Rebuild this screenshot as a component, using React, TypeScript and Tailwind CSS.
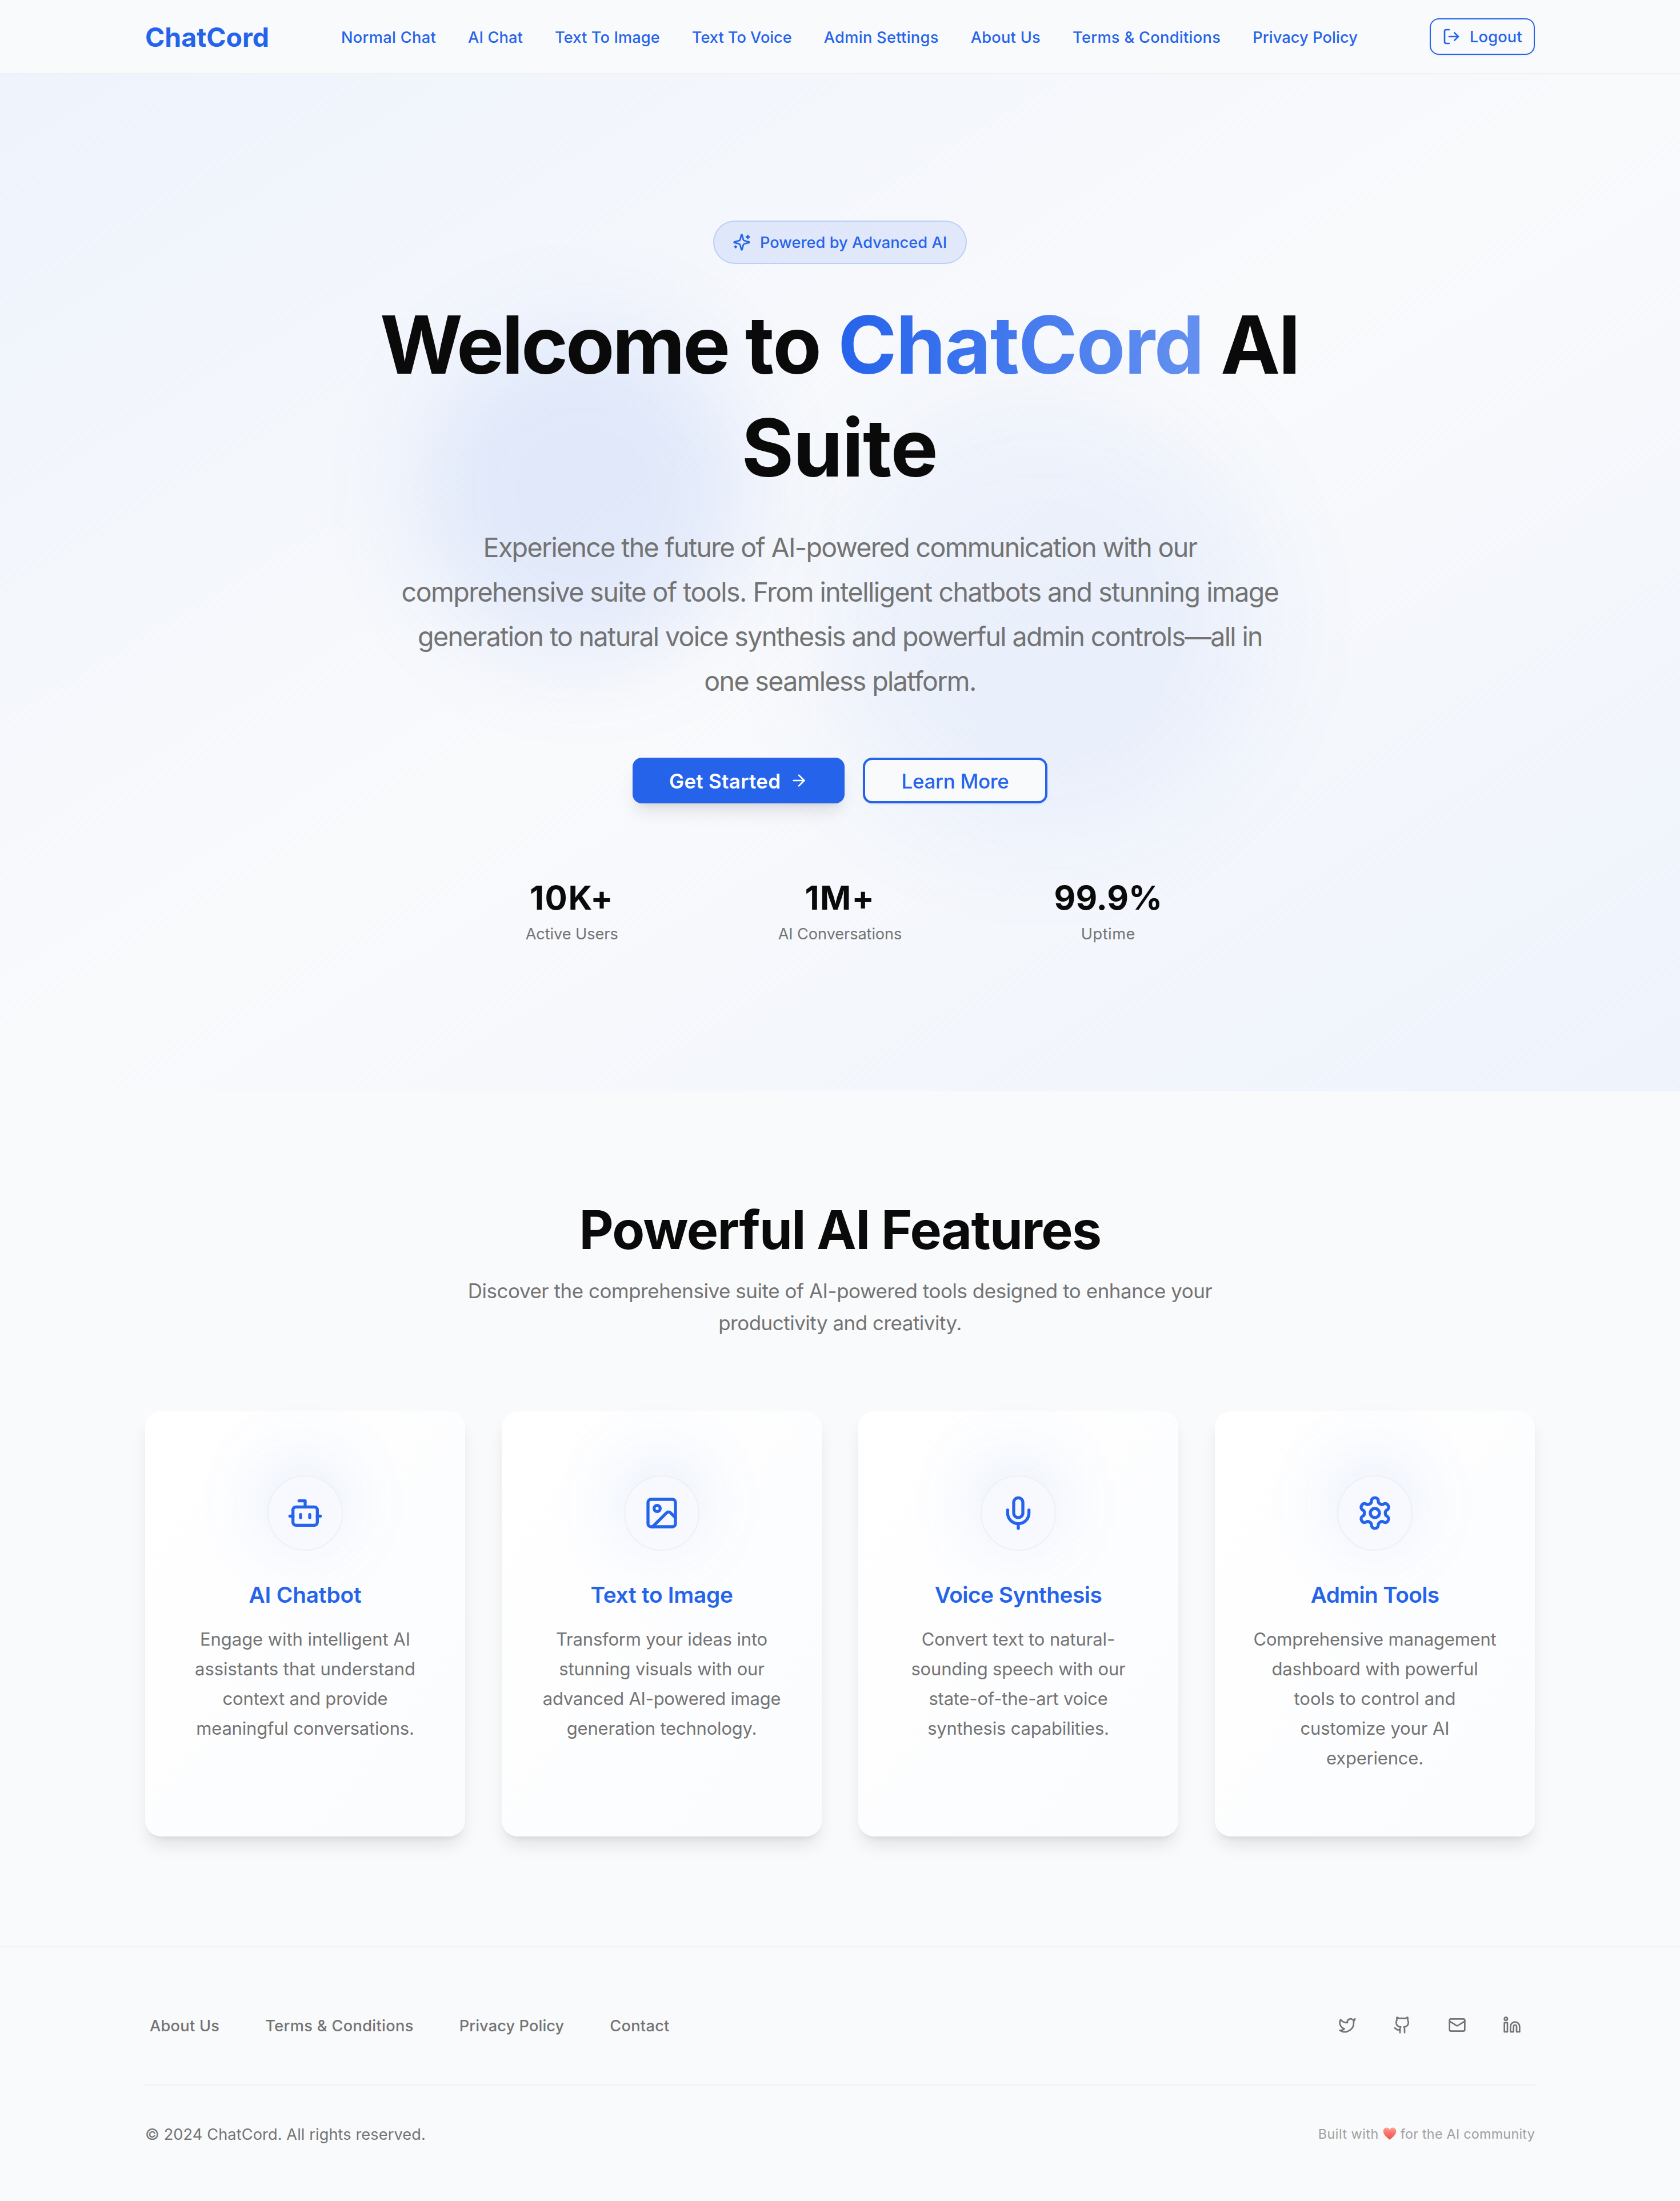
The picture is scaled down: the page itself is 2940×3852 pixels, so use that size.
import type { ComponentType } from "react";
import {
  ArrowRight,
  Bot,
  Github,
  Image as ImageIcon,
  Linkedin,
  LogOut,
  Mail,
  Mic,
  Twitter,
} from "lucide-react";

type Line = { text: string; tracking: string };
type IconType = ComponentType<{ className?: string }>;

function Sparkles({ className }: { className?: string }) {
  return (
    <svg
      viewBox="0 0 24 24"
      fill="none"
      stroke="currentColor"
      strokeWidth="2"
      strokeLinecap="round"
      strokeLinejoin="round"
      className={className}
      aria-hidden="true"
    >
      <path d="M9.937 15.5A2 2 0 0 0 8.5 14.063l-6.135-1.582a.5.5 0 0 1 0-.962L8.5 9.936A2 2 0 0 0 9.937 8.5l1.582-6.135a.5.5 0 0 1 .963 0L14.063 8.5A2 2 0 0 0 15.5 9.937l6.135 1.581a.5.5 0 0 1 0 .964L15.5 14.063a2 2 0 0 0-1.437 1.437l-1.582 6.135a.5.5 0 0 1-.963 0z" />
      <path d="M20 3v4" />
      <path d="M22 5h-4" />
      <path d="M4 17v2" />
      <path d="M5 18H3" />
    </svg>
  );
}

function Gear({ className }: { className?: string }) {
  return (
    <svg
      viewBox="0 0 24 24"
      fill="none"
      stroke="currentColor"
      strokeWidth="2"
      strokeLinecap="round"
      strokeLinejoin="round"
      className={className}
      aria-hidden="true"
    >
      <path d="M12.22 2h-.44a2 2 0 0 0-2 2v.18a2 2 0 0 1-1 1.73l-.43.25a2 2 0 0 1-2 0l-.15-.08a2 2 0 0 0-2.73.73l-.22.38a2 2 0 0 0 .73 2.73l.15.1a2 2 0 0 1 1 1.72v.51a2 2 0 0 1-1 1.74l-.15.09a2 2 0 0 0-.73 2.73l.22.38a2 2 0 0 0 2.73.73l.15-.08a2 2 0 0 1 2 0l.43.25a2 2 0 0 1 1 1.73V20a2 2 0 0 0 2 2h.44a2 2 0 0 0 2-2v-.18a2 2 0 0 1 1-1.73l.43-.25a2 2 0 0 1 2 0l.15.08a2 2 0 0 0 2.73-.73l.22-.39a2 2 0 0 0-.73-2.73l-.15-.08a2 2 0 0 1-1-1.74v-.5a2 2 0 0 1 1-1.74l.15-.09a2 2 0 0 0 .73-2.73l-.22-.38a2 2 0 0 0-2.73-.73l-.15.08a2 2 0 0 1-2 0l-.43-.25a2 2 0 0 1-1-1.73V4a2 2 0 0 0-2-2z" />
      <circle cx="12" cy="12" r="3" />
    </svg>
  );
}

const navLinks: Line[] = [
  { text: "Normal Chat", tracking: "tracking-[0.33px]" },
  { text: "AI Chat", tracking: "tracking-[0.15px]" },
  { text: "Text To Image", tracking: "tracking-[0.12px]" },
  { text: "Text To Voice", tracking: "tracking-[-0.02px]" },
  { text: "Admin Settings", tracking: "tracking-[0.32px]" },
  { text: "About Us", tracking: "tracking-[0.27px]" },
  { text: "Terms & Conditions", tracking: "tracking-[0.32px]" },
  { text: "Privacy Policy", tracking: "tracking-[0.12px]" },
];

const heroLines: Line[] = [
  { text: "Experience the future of AI-powered communication with our", tracking: "tracking-[-1.65px]" },
  { text: "comprehensive suite of tools. From intelligent chatbots and stunning image", tracking: "tracking-[-1.5px]" },
  { text: "generation to natural voice synthesis and powerful admin controls—all in", tracking: "tracking-[-1.63px]" },
  { text: "one seamless platform.", tracking: "tracking-[-1.62px]" },
];

const stats = [
  { value: "10K+", valueTracking: "tracking-[1.6px]", label: "Active Users", labelTracking: "tracking-[-0.09px]" },
  { value: "1M+", valueTracking: "tracking-[1.4px]", label: "AI Conversations", labelTracking: "tracking-[-0.1px]" },
  { value: "99.9%", valueTracking: "tracking-[0px]", label: "Uptime", labelTracking: "tracking-[0.5px]" },
];

type Feature = { icon: IconType; title: Line; lines: Line[] };

const features: Feature[] = [
  {
    icon: Bot,
    title: { text: "AI Chatbot", tracking: "tracking-[-0.15px]" },
    lines: [
      { text: "Engage with intelligent AI", tracking: "tracking-[-0.06px]" },
      { text: "assistants that understand", tracking: "tracking-[-0.02px]" },
      { text: "context and provide", tracking: "tracking-[-0.15px]" },
      { text: "meaningful conversations.", tracking: "tracking-[-0.2px]" },
    ],
  },
  {
    icon: ImageIcon,
    title: { text: "Text to Image", tracking: "tracking-[-0.28px]" },
    lines: [
      { text: "Transform your ideas into", tracking: "tracking-[-0.2px]" },
      { text: "stunning visuals with our", tracking: "tracking-[-0.15px]" },
      { text: "advanced AI-powered image", tracking: "tracking-[-0.26px]" },
      { text: "generation technology.", tracking: "tracking-[-0.2px]" },
    ],
  },
  {
    icon: Mic,
    title: { text: "Voice Synthesis", tracking: "tracking-[-0.51px]" },
    lines: [
      { text: "Convert text to natural-", tracking: "tracking-[-0.1px]" },
      { text: "sounding speech with our", tracking: "tracking-[-0.16px]" },
      { text: "state-of-the-art voice", tracking: "tracking-[-0.2px]" },
      { text: "synthesis capabilities.", tracking: "tracking-[-0.2px]" },
    ],
  },
  {
    icon: Gear,
    title: { text: "Admin Tools", tracking: "tracking-[-0.64px]" },
    lines: [
      { text: "Comprehensive management", tracking: "tracking-[-0.2px]" },
      { text: "dashboard with powerful", tracking: "tracking-[-0.16px]" },
      { text: "tools to control and", tracking: "tracking-[0.05px]" },
      { text: "customize your AI", tracking: "tracking-[-0.1px]" },
      { text: "experience.", tracking: "tracking-[-0.2px]" },
    ],
  },
];

const footerLinks: Line[] = [
  { text: "About Us", tracking: "tracking-[0.27px]" },
  { text: "Terms & Conditions", tracking: "tracking-[0.33px]" },
  { text: "Privacy Policy", tracking: "tracking-[0.1px]" },
  { text: "Contact", tracking: "tracking-[0.25px]" },
];

const socialIcons: IconType[] = [Twitter, Github, Mail, Linkedin];

function TextLine({ line }: { line: Line }) {
  return <span className={`block whitespace-nowrap ${line.tracking}`}>{line.text}</span>;
}

function Header() {
  return (
    <header className="h-[130px] border-b-2 border-[#eff1f3]">
      <div className="mx-auto flex h-full w-[2432px] items-center justify-between">
        <span className="translate-y-px text-[46.5px] leading-[64px] font-bold tracking-[-0.05px] text-[#2563eb]">ChatCord</span>
        <nav className="flex gap-14 pt-[3px] text-[27.2px] leading-10 font-medium text-[#2563eb]">
          {navLinks.map((l) => (
            <a key={l.text} className={`whitespace-nowrap ${l.tracking}`}>
              {l.text}
            </a>
          ))}
        </nav>
        <button className="flex h-16 w-[184px] items-center gap-4 rounded-2xl border-2 border-[#2563eb] pl-5 text-[27.2px] font-medium tracking-[0.2px] text-[#2563eb] shadow-[0_2px_4px_rgb(0_0_0/0.05)]">
          <LogOut className="size-8 shrink-0" />
          <span className="translate-y-px">Logout</span>
        </button>
      </div>
    </header>
  );
}

function Hero() {
  return (
    <section className="relative flex h-[1780px] flex-col items-center overflow-hidden bg-linear-to-br from-[#2563eb]/5 via-[#f9fafc] to-[#2563eb]/5 pt-64">
      <div className="absolute top-1/4 left-1/4 size-[576px] rounded-full bg-[#2563eb]/10 blur-[84px]" />
      <div className="absolute right-1/4 bottom-1/4 size-[768px] rounded-full bg-[#2563eb]/6 blur-[96px]" />

      <div className="relative flex h-[76px] w-[444px] items-center gap-4 rounded-full border-2 border-[#2563eb]/20 bg-[#2563eb]/10 pl-8 text-[27.2px] font-medium tracking-[0.05px] whitespace-nowrap text-[#2563eb]">
        <Sparkles className="size-8 shrink-0" />
        <span className="translate-y-px">Powered by Advanced AI</span>
      </div>

      <h1 className="relative mt-12 -translate-x-px translate-y-[4px] text-center text-[139.6px] leading-[180px] font-bold tracking-[-3.2px] whitespace-nowrap text-[#0a0a0a]">
        <span className="tracking-[-4px]">Welcome</span> <span className="tracking-[-1.5px]">to</span>{" "}
        <span className="bg-linear-to-r from-[#2563eb] to-[#2563eb]/70 bg-clip-text tracking-[-1.6px] text-transparent">ChatCord</span> AI
        <br />
        <span className="tracking-[-1.3px]">Suite</span>
      </h1>

      <p className="relative mt-12 translate-y-px text-center text-[46.5px] leading-[78px] text-[#737373]">
        {heroLines.map((l) => (
          <TextLine key={l.text} line={l} />
        ))}
      </p>

      <div className="relative mt-24 flex gap-8">
        <button className="flex h-20 w-[371px] items-center gap-4 rounded-2xl bg-[#2563eb] pl-16 text-[34.9px] font-semibold tracking-[0.3px] text-white shadow-[0_20px_30px_-6px_rgb(0_0_0/0.1),0_8px_12px_-8px_rgb(0_0_0/0.1)]">
          <span className="translate-y-px">Get Started</span>
          <ArrowRight className="size-8 shrink-0" />
        </button>
        <button className="h-20 w-[323px] rounded-2xl border-4 border-[#2563eb] bg-[#f9fafc] text-[34.9px] font-medium tracking-[-0.28px] text-[#2563eb] shadow-[0_2px_4px_rgb(0_0_0/0.05)]">
          <span className="block translate-y-px">Learn More</span>
        </button>
      </div>

      <div className="relative mt-32 grid w-[1344px] grid-cols-3 gap-16 text-center">
        {stats.map((s) => (
          <div key={s.label}>
            <div className={`translate-y-px text-[58.2px] leading-[72px] font-bold text-[#0a0a0a] ${s.valueTracking}`}>{s.value}</div>
            <div className={`mt-2 translate-y-px text-[27.2px] leading-10 text-[#737373] ${s.labelTracking}`}>{s.label}</div>
          </div>
        ))}
      </div>
    </section>
  );
}

function FeatureCard({ feature }: { feature: Feature }) {
  const Icon = feature.icon;
  return (
    <article className="relative flex h-[744px] flex-col items-center rounded-[28px] bg-linear-to-br from-white to-[#fbfcfe] pt-28 text-center shadow-[0_20px_30px_-6px_rgb(0_0_0/0.1),0_8px_12px_-8px_rgb(0_0_0/0.1)]">
      <div className="absolute top-[80px] left-[196px] size-40 rounded-full bg-[#2563eb]/9 blur-[56px]" />
      <div className="relative flex size-[132px] items-center justify-center rounded-full border-2 border-[#eef0f3] bg-[#f7f9fe]">
        <Icon className="size-16 text-[#2563eb]" />
      </div>
      <h3 className={`relative mt-12 translate-y-px text-[38.8px] leading-[56px] font-semibold text-[#2563eb] ${feature.title.tracking}`}>
        {feature.title.text}
      </h3>
      <p className="mt-6 translate-y-px text-[31px] leading-[52px] text-[#737373]">
        {feature.lines.map((l) => (
          <TextLine key={l.text} line={l} />
        ))}
      </p>
    </article>
  );
}

function Features() {
  return (
    <section className="py-48">
      <div className="text-center">
        <h2 className="translate-y-[2px] text-[93px] leading-[96px] font-bold tracking-[-1.6px] text-[#0a0a0a]">Powerful AI Features</h2>
        <p className="mt-8 translate-y-px text-[34.9px] leading-[56px] text-[#737373]">
          <TextLine
            line={{
              text: "Discover the comprehensive suite of AI-powered tools designed to enhance your",
              tracking: "tracking-[-0.42px]",
            }}
          />
          <TextLine line={{ text: "productivity and creativity.", tracking: "tracking-[-0.46px]" }} />
        </p>
      </div>
      <div className="mx-auto mt-32 grid w-[2432px] grid-cols-4 gap-16">
        {features.map((f) => (
          <FeatureCard key={f.title.text} feature={f} />
        ))}
      </div>
    </section>
  );
}

function Heart() {
  return (
    <svg viewBox="0 0 24 24" className="mx-[7px] size-6 shrink-0" aria-hidden="true">
      <defs>
        <linearGradient id="heart-fill" x1="0" y1="0" x2="0" y2="1">
          <stop offset="0" stopColor="#fba39e" />
          <stop offset="0.35" stopColor="#fc7b73" />
          <stop offset="1" stopColor="#e9524d" />
        </linearGradient>
      </defs>
      <path
        d="M12 22.8C8.6 19.6.8 14.6.8 7.9.8 4.2 3.3 1.6 6.5 1.6c2.3 0 4.4 1.3 5.5 3.6 1.1-2.3 3.2-3.6 5.5-3.6 3.2 0 5.7 2.6 5.7 6.3 0 6.7-7.8 11.7-11.2 14.9Z"
        fill="url(#heart-fill)"
      />
    </svg>
  );
}

function Footer() {
  return (
    <footer className="border-t-2 border-[#eff1f3]">
      <div className="mx-auto w-[2432px] pt-24">
        <div className="flex h-20 items-center justify-between">
          <nav className="flex translate-y-[2px] gap-20 pl-2 text-[27.2px] leading-10 font-medium text-[#737373]">
            {footerLinks.map((l) => (
              <a key={l.text} className={`whitespace-nowrap ${l.tracking}`}>
                {l.text}
              </a>
            ))}
          </nav>
          <div className="flex gap-4 text-[#737373]">
            {socialIcons.map((Icon, i) => (
              <a key={i} className="flex size-20 items-center justify-center">
                <Icon className="size-8" />
              </a>
            ))}
          </div>
        </div>
        <div className="mt-16 flex items-center justify-between border-t-2 border-[#eff1f3] pt-16">
          <p className="translate-y-[1.5px] text-[27.2px] leading-10 tracking-[0.09px] text-[#737373]">© 2024 ChatCord. All rights reserved.</p>
          <p className="flex items-center text-[23.3px] leading-10 whitespace-nowrap text-[#9f9fa0]">
            <span className="translate-y-px tracking-[0.5px]">Built with</span>
            <Heart />
            <span className="translate-y-px tracking-[0.26px]">for the AI community</span>
          </p>
        </div>
      </div>
    </footer>
  );
}

export default function App() {
  return (
    <div className="h-[3852px] w-[2940px] overflow-hidden bg-[#f9fafc] font-['Inter',sans-serif]">
      <Header />
      <Hero />
      <Features />
      <Footer />
    </div>
  );
}
